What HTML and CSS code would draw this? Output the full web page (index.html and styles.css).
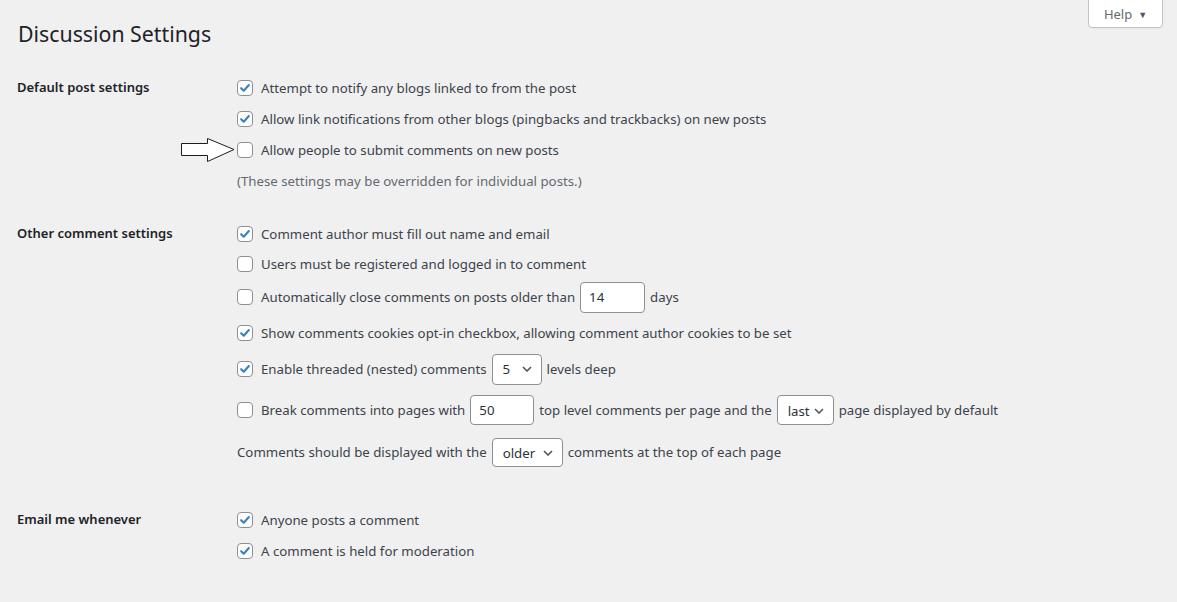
FILE: index.html
```html
<!DOCTYPE html>
<html lang="en">
<head>
<meta charset="utf-8">
<title>Discussion Settings</title>
<link rel="stylesheet" href="styles.css">
</head>
<body>
<div class="help-tab">Help <span class="tri">▼</span></div>
<div class="wrap">
  <h1 class="title">Discussion Settings</h1>

  <section class="form-row sec1">
    <div class="th h31">Default post settings</div>
    <div class="td">
      <div class="opt h31"><span class="cb on"><svg viewBox="0 0 16 16"><path d="M3.6 8.2 L6.6 11.1 L12.4 4.6"/></svg></span><span>Attempt to notify any blogs linked to from the post</span></div>
      <div class="opt h31"><span class="cb on"><svg viewBox="0 0 16 16"><path d="M3.6 8.2 L6.6 11.1 L12.4 4.6"/></svg></span><span>Allow link notifications from other blogs (pingbacks and trackbacks) on new posts</span></div>
      <div class="opt h31 arrowed">
        <svg class="arrow" viewBox="0 0 54 25"><path d="M0.5 5.5 H26.5 V0.5 L53 11.5 L26.5 23.5 V17.5 H0.5 Z"/></svg>
        <span class="cb"></span><span>Allow people to submit comments on new posts</span></div>
      <div class="desc h30">(These settings may be overridden for individual posts.)</div>
    </div>
  </section>

  <section class="form-row sec2">
    <div class="th h30">Other comment settings</div>
    <div class="td">
      <div class="opt h30"><span class="cb on"><svg viewBox="0 0 16 16"><path d="M3.6 8.2 L6.6 11.1 L12.4 4.6"/></svg></span><span>Comment author must fill out name and email</span></div>
      <div class="opt h30"><span class="cb"></span><span>Users must be registered and logged in to comment</span></div>
      <div class="opt h36"><span class="cb"></span><span>Automatically close comments on posts older than</span><span class="field w65 t31">14</span><span>days</span></div>
      <div class="opt h36"><span class="cb on"><svg viewBox="0 0 16 16"><path d="M3.6 8.2 L6.6 11.1 L12.4 4.6"/></svg></span><span>Show comments cookies opt-in checkbox, allowing comment author cookies to be set</span></div>
      <div class="opt h36"><span class="cb on"><svg viewBox="0 0 16 16"><path d="M3.6 8.2 L6.6 11.1 L12.4 4.6"/></svg></span><span>Enable threaded (nested) comments</span><span class="select w50 t31">5<svg class="chev" viewBox="0 0 10 6"><path d="M1 1 L5 5 L9 1"/></svg></span><span>levels deep</span></div>
      <div class="opt h46"><span class="cb"></span><span>Break comments into pages with</span><span class="field w64 t30">50</span><span>top level comments per page and the</span><span class="select w57 t30 lower">last<svg class="chev" viewBox="0 0 10 6"><path d="M1 1 L5 5 L9 1"/></svg></span><span>page displayed by default</span></div>
      <div class="opt h38"><span>Comments should be displayed with the</span><span class="select w71 t29 lower">older<svg class="chev" viewBox="0 0 10 6"><path d="M1 1 L5 5 L9 1"/></svg></span><span>comments at the top of each page</span></div>
    </div>
  </section>

  <section class="form-row sec3">
    <div class="th h31">Email me whenever</div>
    <div class="td">
      <div class="opt h31"><span class="cb on"><svg viewBox="0 0 16 16"><path d="M3.6 8.2 L6.6 11.1 L12.4 4.6"/></svg></span><span>Anyone posts a comment</span></div>
      <div class="opt h31"><span class="cb on"><svg viewBox="0 0 16 16"><path d="M3.6 8.2 L6.6 11.1 L12.4 4.6"/></svg></span><span>A comment is held for moderation</span></div>
    </div>
  </section>
</div>
</body>
</html>
```

FILE: styles.css
```css
html, body {
  margin: 0;
  padding: 0;
  background: #f0f0f1;
}
body {
  font-family: "Noto Sans", "Open Sans", sans-serif;
  font-size: 13.25px;
  color: #3c434a;
  height: 602px;
  overflow: hidden;
  position: relative;
}
.wrap {
  padding: 19px 0 0 17px;
}
.title {
  margin: 0 0 0 1px;
  font-size: 21.3px;
  font-weight: 400;
  line-height: 30px;
  color: #1d2327;
}
.form-row {
  display: grid;
  grid-template-columns: 220px 1fr;
}
.sec1 { margin-top: 23.5px; }
.sec2 { margin-top: 23.5px; }
.sec3 { margin-top: 33.5px; }
.th {
  display: flex;
  align-items: center;
  font-weight: 600;
  font-size: 13px;
  color: #1d2327;
  padding-bottom: 2px;
  box-sizing: border-box;
}
.td {
  display: flex;
  flex-direction: column;
}
.opt {
  display: flex;
  align-items: center;
  gap: 5px;
  position: relative;
}
.h29 { height: 29px; }
.h30 { height: 30px; }
.h31 { height: 31px; }
.h36 { height: 36px; }
.h38 { height: 38px; }
.h46 { height: 46px; }
.desc {
  display: flex;
  align-items: center;
  color: #646970;
}
.cb {
  width: 16px;
  height: 16px;
  box-sizing: border-box;
  border: 1px solid #8c8f94;
  border-radius: 4px;
  background: #fff;
  margin-right: 3px;
  flex: none;
  display: flex;
  align-items: center;
  justify-content: center;
}
.cb svg {
  width: 14px;
  height: 14px;
  fill: none;
  stroke: #3582c4;
  stroke-width: 2.4;
  stroke-linecap: round;
  stroke-linejoin: round;
}
.field, .select {
  box-sizing: border-box;
  border: 1px solid #8c8f94;
  border-radius: 4px;
  background: #fff;
  color: #2c3338;
  display: flex;
  align-items: center;
  padding: 0 8px;
  flex: none;
}
.select {
  justify-content: space-between;
  padding: 0 9px 0 10px;
}
.lower { padding-top: 2px; }
.chev {
  width: 10px;
  height: 6px;
  fill: none;
  stroke: #50575e;
  stroke-width: 1.6;
}
.w50 { width: 50px; }
.w57 { width: 57px; }
.w64 { width: 64px; }
.w65 { width: 65px; }
.w71 { width: 71px; }
.t29 { height: 29px; }
.t30 { height: 30px; }
.t31 { height: 31px; }
.arrow {
  position: absolute;
  left: -56px;
  top: 3px;
  width: 54px;
  height: 25px;
  fill: #fff;
  stroke: #1d1d1d;
  stroke-width: 1;
}
.help-tab {
  position: absolute;
  top: -1px;
  right: 14px;
  width: 75px;
  height: 29px;
  box-sizing: border-box;
  background: #fff;
  border: 1px solid #c3c4c7;
  border-radius: 0 0 4px 4px;
  box-shadow: 0 1px 1px rgba(0,0,0,0.04);
  display: flex;
  align-items: center;
  justify-content: center;
  gap: 6px;
  font-size: 13px;
  color: #646970;
  padding-top: 1px;
}
.tri {
  font-size: 9px;
  color: #50575e;
}
```
